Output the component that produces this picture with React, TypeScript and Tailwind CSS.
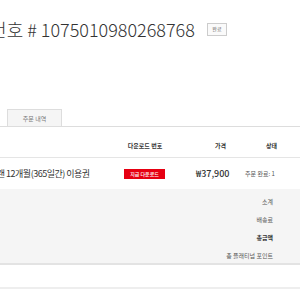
export default function App() {
  const font = { fontFamily: '"Noto Sans CJK KR", "Noto Sans", sans-serif' };
  return (
    <div className="w-[300px] h-[300px] overflow-hidden bg-white text-[#333]" style={font}>
      <div className="pt-[17px] h-[109px]">
        <div className="flex items-center whitespace-nowrap -ml-[47px]">
          <h1 className="text-[18px] font-light leading-[24px] text-[#333]">주문 번호 # 1075010980268768</h1>
          <span className="ml-[12px] flex h-[13px] w-[20px] items-center justify-center border border-[#ccc] bg-[#fafafa] text-[5px] text-[#666]">
            완료
          </span>
        </div>
      </div>

      <div className="flex h-[18px] border-b border-[#ddd]">
        <div className="w-[8px] border-r border-[#ddd]" />
        <div className="flex w-[54px] items-center justify-center border-t border-r border-[#ddd] bg-[#f5f5f5] text-[6px] text-[#777]">
          주문 내역
        </div>
      </div>

      <div className="flex h-[31px] items-end pb-[7px] border-b border-[#e5e5e5] text-[6px] font-bold text-[#333]">
        <div className="w-[124px]" />
        <div className="w-[42px] text-center">다운로드 번호</div>
        <div className="w-[60px] text-right">가격</div>
        <div className="w-[51px] text-right">상태</div>
      </div>

      <div className="flex h-[31px] items-center">
        <div className="w-[124px] overflow-hidden whitespace-nowrap">
          <span className="-ml-[11px] block text-[9px] tracking-[-0.5px] text-[#333]">플랜 12개월(365일간) 이용권</span>
        </div>
        <div className="flex w-[72px] items-center">
          <span className="flex h-[10px] w-[41px] items-center justify-center bg-[#e60012] text-[5px] font-medium text-white">
            지금 다운로드
          </span>
        </div>
        <div className="w-[30px] text-right text-[9px] font-medium text-[#333]">₩37,900</div>
        <div className="w-[19px]" />
        <div className="text-[6px] text-[#555]">주문 완료: 1</div>
      </div>

      <div className="h-[76px] bg-[#f5f5f5] border-b-2 border-[#e3e3e3] pr-[27px] pt-[9px] flex flex-col items-end gap-[11px] text-[6px] text-[#555]">
        <div className="leading-[7px]">소계</div>
        <div className="leading-[7px]">배송료</div>
        <div className="leading-[7px] font-bold text-[#333]">총금액</div>
        <div className="leading-[7px]">총 플래티넘 포인트</div>
      </div>

      <div className="h-[24px] border-b-2 border-[#eee]" />
    </div>
  );
}
